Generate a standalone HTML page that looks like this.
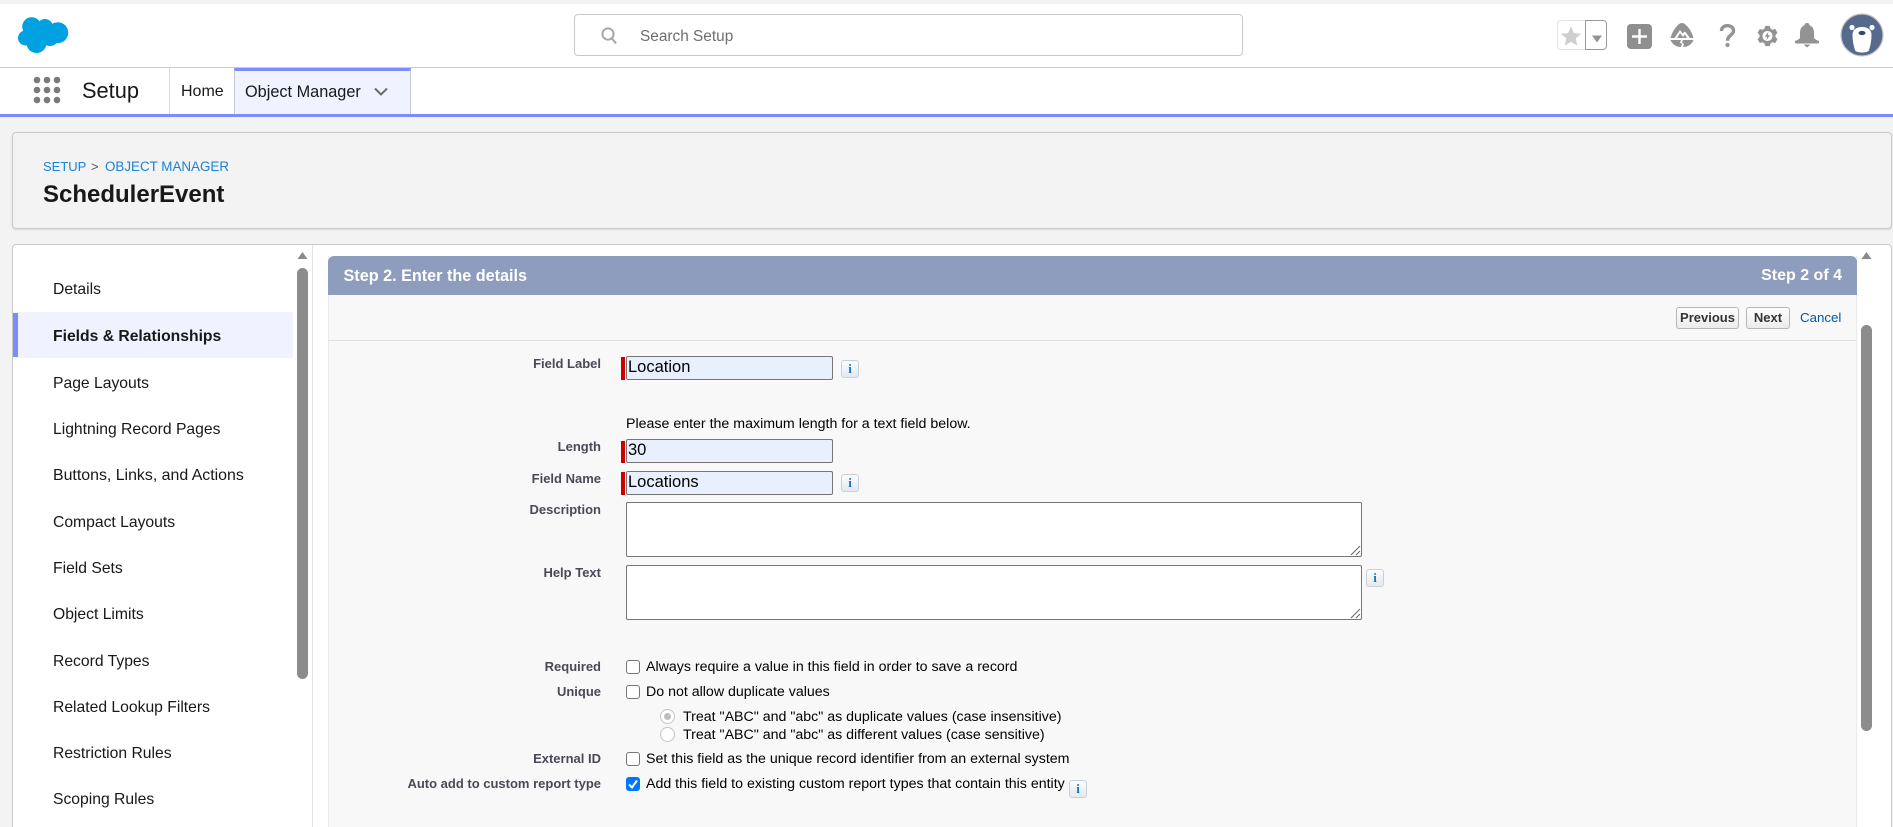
<!DOCTYPE html>
<html lang="en"><head><meta charset="utf-8"><title>SchedulerEvent | Setup</title>
<style>
html,body{margin:0;padding:0;width:1893px;height:827px;overflow:hidden;background:#f3f3f3;font-family:"Liberation Sans",Arial,sans-serif}
div,span,svg{position:absolute;box-sizing:border-box}
#root{left:0;top:0;width:1893px;height:827px;overflow:hidden;background:#f3f3f3}
.t{white-space:nowrap;line-height:20px;height:20px}
.n{left:53px;font-size:15.7px;color:#181818}
.l{right:1292px;font-size:13px;font-weight:bold;color:#4a4a56;text-align:right}
.v{font-size:14.2px;color:#000}
.in{left:626px;width:207px;height:24px;background:#e8f0fe;border:1px solid #767676;border-radius:2px;font-size:16.5px;color:#000;line-height:21px;padding-left:1px;white-space:nowrap}
.rq{left:621px;width:4px;height:23px;background:#c00}
.ta{left:626px;width:736px;height:55px;background:#fff;border:1px solid #767676;border-radius:2px}
.i{width:18px;height:18px;background:linear-gradient(#fafcff,#e3e9f0);border:1px solid #c8d0d8;border-radius:3px;color:#1a74c9;font:bold 13px/16px "Liberation Serif",serif;text-align:center}
.c{left:626px;width:14px;height:14px;background:#fff;border:1px solid #767676;border-radius:3px}
.r{left:660px;width:15px;height:15px;border-radius:50%;border:1px solid #c4c4c4;background:#fff}
.b{top:307px;height:22px;background:linear-gradient(#fdfdfd,#ececec);border:1px solid #b5b5b5;border-radius:3px;font-size:13px;font-weight:bold;color:#333;line-height:19px;text-align:center}
.ic{fill:#939393}
</style></head><body>
<div id="root">

<div style="left:0;top:0;width:1893px;height:4px;background:#f3f3f3"></div>
<div style="left:0;top:4px;width:1893px;height:63px;background:#fff"></div>
<div style="left:0;top:67px;width:1893px;height:1px;background:#cbcbcb"></div>
<div style="left:0;top:68px;width:1893px;height:46px;background:#fff"></div>
<div style="left:0;top:114px;width:1893px;height:3px;background:#7b8cff"></div>

<svg style="left:17px;top:16px" width="52" height="38" viewBox="17 16 52 38"><g fill="#00a1e0"><circle cx="31.700" cy="26.700" r="9.500"/><circle cx="45" cy="27" r="8"/><circle cx="57.700" cy="32.700" r="10.500"/><circle cx="25.500" cy="38" r="7.500"/><circle cx="36.500" cy="43" r="10"/><circle cx="50" cy="37" r="9"/><rect x="28" y="27" width="28" height="14"/></g></svg>

<div style="left:574px;top:14px;width:669px;height:42px;background:#fff;border:1px solid #c9c9c9;border-radius:4px"></div>
<svg style="left:600px;top:26px" width="18" height="20" viewBox="0 0 18 20"><circle cx="8" cy="8" r="5.600" fill="none" stroke="#a8a8a8" stroke-width="2"/><path d="M12 12.500l4 5" stroke="#a8a8a8" stroke-width="2.200"/></svg>
<div class="t" style="left:640px;top:27px;font-size:15.400px;color:#706e6b">Search Setup</div>

<div style="left:1557px;top:20px;width:29px;height:30px;border:1px solid #e3e3e3;border-right:0;border-radius:4px 0 0 4px;background:#fff"></div>
<div style="left:1585px;top:20px;width:22px;height:30px;border:1px solid #9a9a9a;border-radius:0 4px 4px 0;background:#fff"></div>
<svg style="left:1560px;top:25px" width="22" height="22" viewBox="0 0 24 24"><path fill="#cfcfcf" d="M12 1.500l3.200 7.300 7.900.7-6 5.200 1.800 7.800L12 18.400 5.100 22.500l1.800-7.800-6-5.200 7.900-.7z"/></svg>
<svg style="left:1591px;top:35px" width="12" height="8" viewBox="0 0 12 8"><path class="ic" d="M1 .5h10L6 7.500z"/></svg>

<div style="left:1627px;top:24px;width:25px;height:25px;background:#8f8f8f;border-radius:4px"></div>
<svg style="left:1627px;top:24px" width="25" height="25" viewBox="0 0 25 25"><path d="M12.500 5v15M5 12.500h15" stroke="#fff" stroke-width="2.400"/></svg>

<svg style="left:1670px;top:23px" width="24" height="24" viewBox="0 0 24 24"><path class="ic" d="M12 0C14 0 15.500 1.500 17 3 20 6 22.500 11 23.500 15L.5 15C1.500 11 4 6 7 3 8.500 1.500 10 0 12 0z"/><path fill="#fff" d="M4.500 15L10 7l2.500 3.500L15 8.500 20 15h-3l-2-3.500-2 2.500-3-4-3 5z"/><path class="ic" d="M.5 17H11l-1 2.500 2 1.500-1 3C6 24 2 21 .5 17zM23.500 17H13l-1 2.500 2 1.500-1 3c5 0 9-3 10.500-7z"/></svg>

<svg style="left:1718px;top:23px" width="20" height="25" viewBox="0 0 20 25"><path d="M3.500 8C3.500 4.500 6 2.700 9.500 2.700s6 2 6 5c0 4.500-6 4.500-6 10" fill="none" stroke="#939393" stroke-width="3.400"/><circle cx="9.500" cy="22" r="2.100" fill="#939393"/></svg>

<svg style="left:1757px;top:25px" width="21" height="22" viewBox="0 0 22 24"><path class="ic" fill-rule="evenodd" d="M8.500 1h5l.8 3 2.200 1.200 3-.9 2.400 4.300-2.200 2.200v2.400l2.200 2.200-2.400 4.300-3-.9L14.300 20l-.8 3h-5l-.8-3-2.200-1.200-3 .9L.1 15.400l2.200-2.200v-2.400L.1 8.600l2.400-4.300 3 .9L7.700 4zM11 6.500a5.500 5.500 0 1 0 0 11 5.500 5.500 0 0 0 0-11z"/><path class="ic" d="M12 7.500L8 12.800h2.500L9.700 16.500l4.200-5.500h-2.500z"/></svg>

<svg style="left:1795px;top:23px" width="24" height="25" viewBox="0 0 24 25"><path class="ic" d="M12 0c1.500 0 2.500 1 2.500 2.200C18 3.500 19 6.500 19 10v4c0 1.500 1 2.500 5 4v1.500c0 .5-.5 1-1 1H1c-.5 0-1-.5-1-1V18c4-1.500 5-2.500 5-4v-4C5 6.500 6 3.500 9.500 2.200 9.500 1 10.500 0 12 0zM8.500 21.500h7L12 24.500z"/></svg>

<svg style="left:1840px;top:13px" width="44" height="44" viewBox="0 0 44 44"><circle cx="22" cy="22" r="21" fill="#566a8e" stroke="#c4c4c4" stroke-width="1.200"/><circle cx="12" cy="14.500" r="2.600" fill="#fff"/><circle cx="32" cy="14.500" r="2.600" fill="#fff"/><path fill="#fff" d="M22 14c6 0 9.500 3 9.500 8 0 6-1.500 13-3 16-2.500 2-10.500 2-13 0-1.500-3-3-10-3-16 0-5 3.500-8 9.500-8z"/><ellipse cx="22" cy="20" rx="3.500" ry="2.100" fill="#33476a"/></svg>

<svg style="left:33px;top:76px" width="28" height="28" viewBox="33 76 28 28"><g fill="#7a7a7a"><circle cx="37" cy="80" r="3.300"/><circle cx="47" cy="80" r="3.300"/><circle cx="57" cy="80" r="3.300"/><circle cx="37" cy="90" r="3.300"/><circle cx="47" cy="90" r="3.300"/><circle cx="57" cy="90" r="3.300"/><circle cx="37" cy="100" r="3.300"/><circle cx="47" cy="100" r="3.300"/><circle cx="57" cy="100" r="3.300"/></g></svg>
<div class="t" style="left:82px;top:81px;font-size:21.800px;color:#181818">Setup</div>
<div style="left:169px;top:68px;width:1px;height:46px;background:#dcdcdc"></div>
<div class="t" style="left:181px;top:82px;font-size:16px;color:#181818">Home</div>
<div style="left:234px;top:68px;width:177px;height:46px;background:#f0f3ff;border-left:1px solid #c4c8d4;border-right:1px solid #c4c8d4;border-top:3px solid #7b8cff"></div>
<div class="t" style="left:245px;top:82px;font-size:16.300px;color:#181818">Object Manager</div>
<svg style="left:373px;top:86px" width="16" height="12" viewBox="0 0 16 12"><path d="M2 2.500l6 6 6-6" fill="none" stroke="#6b6b6b" stroke-width="2"/></svg>

<div style="left:12px;top:132px;width:1880px;height:97px;background:#f3f3f3;border:1px solid #c9c9c9;border-radius:4px;box-shadow:0 1px 2px rgba(0,0,0,.1)"></div>
<div class="t" style="left:43px;top:157px;font-size:13px;color:#1b82d4">SETUP</div>
<div class="t" style="left:91px;top:157px;font-size:13px;color:#555">&gt;</div>
<div class="t" style="left:105px;top:157px;font-size:13.400px;color:#1b82d4">OBJECT MANAGER</div>
<div class="t" style="left:43px;top:185px;font-size:24px;font-weight:bold;color:#181818">SchedulerEvent</div>

<div style="left:12px;top:244px;width:1880px;height:600px;background:#fff;border:1px solid #c9c9c9;border-radius:4px"></div>

<div style="left:13px;top:312px;width:280px;height:46px;background:#f0f3ff"></div>
<div style="left:13px;top:313px;width:5px;height:44px;background:#7b8cff"></div>
<div class="t n" style="top:280px">Details</div>
<div class="t n" style="top:327px;font-weight:bold">Fields &amp; Relationships</div>
<div class="t n" style="top:374px">Page Layouts</div>
<div class="t n" style="top:420px">Lightning Record Pages</div>
<div class="t n" style="top:466px;font-size:15.900px">Buttons, Links, and Actions</div>
<div class="t n" style="top:513px">Compact Layouts</div>
<div class="t n" style="top:559px">Field Sets</div>
<div class="t n" style="top:605px">Object Limits</div>
<div class="t n" style="top:652px">Record Types</div>
<div class="t n" style="top:698px">Related Lookup Filters</div>
<div class="t n" style="top:744px">Restriction Rules</div>
<div class="t n" style="top:790px">Scoping Rules</div>

<svg style="left:297px;top:251px" width="11" height="9" viewBox="0 0 11 9"><path d="M5.500 1L10.500 8H.5z" fill="#8a8a8a"/></svg>
<div style="left:297px;top:268px;width:11px;height:411px;background:#8c8c8c;border-radius:5.500px"></div>
<div style="left:312px;top:245px;width:1px;height:582px;background:#e3e3e3"></div>

<div style="left:328px;top:256px;width:1529px;height:571px;background:#f8f8f8;border-left:1px solid #eaeaea;border-right:1px solid #eaeaea"></div>
<div style="left:328px;top:256px;width:1529px;height:39px;background:#8e9dbd;border-radius:6px 6px 0 0"></div>
<div style="left:329px;top:340px;width:1527px;height:1px;background:#dfdfdf"></div>
<div class="t" style="left:343.500px;top:266px;font-size:16.200px;font-weight:bold;color:#fff">Step 2. Enter the details</div>
<div class="t" style="right:51px;top:266px;font-size:16px;font-weight:bold;color:#fff">Step 2 of 4</div>

<div class="b" style="left:1676px;width:63px">Previous</div>
<div class="b" style="left:1746px;width:44px">Next</div>
<div class="t" style="left:1800px;top:308px;font-size:13.300px;color:#015ba7">Cancel</div>

<svg style="left:1861px;top:251px" width="11" height="9" viewBox="0 0 11 9"><path d="M5.500 1L10.500 8H.5z" fill="#8a8a8a"/></svg>
<div style="left:1861px;top:325px;width:11px;height:406px;background:#8c8c8c;border-radius:5.500px"></div>

<div class="t l" style="top:354px">Field Label</div>
<div class="rq" style="top:357px"></div>
<div class="in" style="top:356px">Location</div>
<div class="i" style="left:841px;top:360px">i</div>

<div class="t v" style="left:626px;top:414px">Please enter the maximum length for a text field below.</div>

<div class="t l" style="top:437px">Length</div>
<div class="rq" style="top:441px;height:22px"></div>
<div class="in" style="top:439px">30</div>

<div class="t l" style="top:469px">Field Name</div>
<div class="rq" style="top:472px"></div>
<div class="in" style="top:471px">Locations</div>
<div class="i" style="left:841px;top:474px">i</div>

<div class="t l" style="top:500px">Description</div>
<div class="ta" style="top:502px"></div>
<svg style="left:1350px;top:545px" width="11" height="11" viewBox="0 0 11 11"><path d="M1 10L10 1M6 10l4-4" stroke="#666" stroke-width="1"/></svg>

<div class="t l" style="top:563px">Help Text</div>
<div class="ta" style="top:565px"></div>
<svg style="left:1350px;top:608px" width="11" height="11" viewBox="0 0 11 11"><path d="M1 10L10 1M6 10l4-4" stroke="#666" stroke-width="1"/></svg>
<div class="i" style="left:1366px;top:569px">i</div>

<div class="t l" style="top:657px">Required</div>
<div class="c" style="top:660px"></div>
<div class="t v" style="left:646px;top:657px">Always require a value in this field in order to save a record</div>

<div class="t l" style="top:682px">Unique</div>
<div class="c" style="top:685px"></div>
<div class="t v" style="left:646px;top:682px">Do not allow duplicate values</div>

<div class="r" style="top:709px"></div>
<div style="left:664px;top:713px;width:7px;height:7px;border-radius:50%;background:#bdbdbd"></div>
<div class="t v" style="left:683px;top:707px">Treat "ABC" and "abc" as duplicate values (case insensitive)</div>
<div class="r" style="top:727px"></div>
<div class="t v" style="left:683px;top:725px">Treat "ABC" and "abc" as different values (case sensitive)</div>

<div class="t l" style="top:749px">External ID</div>
<div class="c" style="top:752px"></div>
<div class="t v" style="left:646px;top:749px">Set this field as the unique record identifier from an external system</div>

<div class="t l" style="top:774px">Auto add to custom report type</div>
<div class="c" style="top:777px;background:#0075ff;border-color:#0075ff"></div>
<svg style="left:626px;top:777px" width="14" height="14" viewBox="0 0 14 14"><path d="M3 7.500l3 3 5-7" fill="none" stroke="#fff" stroke-width="2"/></svg>
<div class="t v" style="left:646px;top:774px">Add this field to existing custom report types that contain this entity</div>
<div class="i" style="left:1069px;top:780px">i</div>

</div>
</body></html>
